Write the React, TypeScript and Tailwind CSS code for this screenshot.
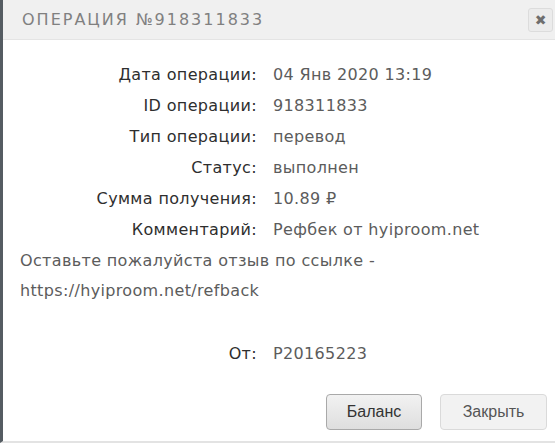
const rows = [
  { label: "Дата операции:", value: "04 Янв 2020 13:19" },
  { label: "ID операции:", value: "918311833" },
  { label: "Тип операции:", value: "перевод" },
  { label: "Статус:", value: "выполнен" },
  { label: "Сумма получения:", value: "10.89 ₽" },
  { label: "Комментарий:", value: "Рефбек от hyiproom.net" },
];

function Row({ label, value }: { label: string; value: string }) {
  return (
    <div className="flex h-[31px] items-center">
      <div className="w-[254px] text-right text-[#2e2e2e]">{label}</div>
      <div className="ml-[16px] text-[#5c5c5c]">{value}</div>
    </div>
  );
}

export default function App() {
  return (
    <div
      className="w-[555px] h-[443px] bg-white border-l-[3px] border-b-2 border-l-[#555c62] border-b-[#e3e3e3] flex flex-col overflow-hidden"
      style={{ fontFamily: '"DejaVu Sans", "Noto Sans", sans-serif' }}
    >
      <div className="h-[40px] bg-[#f0f0f0] border-b border-[#e4e4e4] flex items-center justify-between pl-[19px] pr-[2px] shrink-0">
        <span className="text-[16px] tracking-[2px] text-[#808080]">ОПЕРАЦИЯ №918311833</span>
        <button className="w-[25px] h-[24px] rounded-[3px] border border-[#dcdcdc] bg-[#ececec] flex items-center justify-center text-[#6e6e6e] text-[14px] font-bold leading-none">
          ✖
        </button>
      </div>

      <div className="pt-[19px] text-[16px] tracking-[0.35px]">
        {rows.map((r) => (
          <Row key={r.label} label={r.label} value={r.value} />
        ))}
        <div className="pl-[17px] text-[#5c5c5c]">
          <div className="h-[31px] flex items-center">Оставьте пожалуйста отзыв по ссылке -</div>
          <div className="h-[30px] flex items-center">https://hyiproom.net/refback</div>
        </div>
        <div className="mt-[32px]">
          <Row label="От:" value="P20165223" />
        </div>
      </div>

      <div
        className="mt-[25px] flex justify-end gap-[18px] pr-[8px]"
        style={{ fontFamily: '"Liberation Sans", Arial, sans-serif' }}
      >
        <button className="w-[96px] h-[36px] rounded-[4px] border border-[#a9a9a9] bg-gradient-to-b from-[#f2f2f2] to-[#dedede] text-[16px] text-[#333]">
          Баланс
        </button>
        <button className="w-[107px] h-[36px] rounded-[4px] border border-[#dadada] bg-[#f2f2f2] text-[16px] text-[#555]">
          Закрыть
        </button>
      </div>
    </div>
  );
}
